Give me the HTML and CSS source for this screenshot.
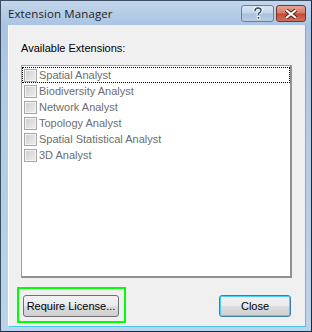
FILE: index.html
```html
<!DOCTYPE html>
<html lang="en">
<head>
  <meta charset="UTF-8" />
  <title>Extension Manager</title>
  <link rel="stylesheet" href="styles.css">
</head>
<body>

  <div class="window">
    <div class="titlebar">
      <span class="title">Extension Manager</span>
      <div class="caption-buttons">
        <div class="cap-btn help">
          <svg width="12" height="13" viewBox="0 0 12 13">
            <path d="M3 4 Q3 1 6 1 Q9 1 9 3.5 Q9 5 7 6 L6.5 6.5 L6.5 8" fill="none" stroke="#fff" stroke-width="3.4"/>
            <path d="M3 4 Q3 1 6 1 Q9 1 9 3.5 Q9 5 7 6 L6.5 6.5 L6.5 8" fill="none" stroke="#3b4b60" stroke-width="1.5"/>
            <rect x="5.2" y="9.5" width="2.6" height="2.6" fill="#3b4b60" stroke="#fff" stroke-width="0.8"/>
          </svg>
        </div>
        <div class="cap-btn close">
          <svg width="14" height="10" viewBox="0 0 14 10">
            <path d="M2 1 L12 9 M12 1 L2 9" stroke="#5a1a12" stroke-width="4"/>
            <path d="M2 1 L12 9 M12 1 L2 9" stroke="#fff" stroke-width="2.2"/>
          </svg>
        </div>
      </div>
    </div>

    <div class="client">
      <div class="label">Available Extensions:</div>

      <div class="listbox">
        <div class="item focused"><span class="check"></span>Spatial Analyst</div>
        <div class="item"><span class="check"></span>Biodiversity Analyst</div>
        <div class="item"><span class="check"></span>Network Analyst</div>
        <div class="item"><span class="check"></span>Topology Analyst</div>
        <div class="item"><span class="check"></span>Spatial Statistical Analyst</div>
        <div class="item"><span class="check"></span>3D Analyst</div>
      </div>

      <div class="footer">
        <div class="highlight">
          <button class="btn">Require License...</button>
        </div>
        <button class="btn default">Close</button>
      </div>
    </div>
  </div>

</body>
</html>
```

FILE: styles.css
```css
body {
  margin: 0;
  font-family: "Liberation Sans", Arial, sans-serif;
  font-size: 11px;
  background: #ffffff;
}
.window {
  width: 312px;
  height: 332px;
  box-sizing: border-box;
  border: 1px solid #3c4e63;
  border-right-color: #1b2a3a;
  border-bottom-color: #1b2a3a;
  background: linear-gradient(to bottom, #c3d6ec 0px, #a9c4e2 24px, #b3cbe6 120px, #bcd3ec 332px);
  display: flex;
  flex-direction: column;
  padding: 0 5px 4px 7px;
}
.titlebar {
  height: 24px;
  display: flex;
  align-items: flex-start;
  justify-content: space-between;
}
.title {
  font-family: "Open Sans", "DejaVu Sans", sans-serif;
  font-size: 11.5px;
  color: #1e1e1e;
  padding-top: 5px;
  letter-spacing: 0.1px;
}
.caption-buttons {
  display: flex;
  gap: 2px;
  padding-top: 4px;
}
.cap-btn {
  height: 17px;
  box-sizing: border-box;
  border: 1px solid #6d7f96;
  border-radius: 3px;
  display: flex;
  align-items: center;
  justify-content: center;
}
.cap-btn.help {
  width: 33px;
  background: linear-gradient(to bottom, #dbe6f3 0%, #c2d3e8 48%, #a9c0dc 52%, #b9cde5 100%);
}
.cap-btn.close {
  width: 30px;
  border-color: #7a3328;
  background: linear-gradient(to bottom, #e8a493 0%, #d67a66 48%, #c44a32 52%, #d0705a 100%);
}
.client {
  flex: 1;
  background: #f0f0f0;
  border-right: 1px solid #49c4f0;
  border-bottom: 1px solid #49c4f0;
  border-left: 1px solid #ffffff;
  display: flex;
  flex-direction: column;
  padding: 0 13px 0 12px;
}
.label {
  margin-top: 17px;
  height: 13px;
  color: #000;
}
.listbox {
  margin-top: 10px;
  height: 213px;
  box-sizing: border-box;
  background: #fff;
  border-left: 1px solid #a0a0a0;
  border-top: 1px solid #a0a0a0;
  border-right: 2px solid #8f9094;
  border-bottom: 2px solid #8f9094;
  padding: 1px 0 0 0;
}
.item {
  height: 16px;
  display: flex;
  align-items: center;
  color: #6d6d6d;
  padding-left: 1px;
  box-sizing: border-box;
}
.item.focused {
  outline: 1px dotted #000;
  outline-offset: -1px;
}
.check {
  width: 13px;
  height: 13px;
  box-sizing: border-box;
  border: 1px solid #a8a8a8;
  background: linear-gradient(135deg, #cfcfcf, #eeeeee);
  box-shadow: inset 0 0 0 1px #f4f4f4;
  margin-right: 2px;
  margin-left: 1px;
}
.footer {
  margin-top: 9px;
  display: flex;
  justify-content: space-between;
  align-items: center;
}
.highlight {
  border: 2px solid #00ff00;
  padding: 6px 5px 4px 4px;
  margin-left: -4px;
}
.btn {
  font-family: "Liberation Sans", Arial, sans-serif;
  font-size: 11px;
  color: #000;
  height: 22px;
  width: 96px;
  border: 1px solid #707070;
  border-radius: 3px;
  background: linear-gradient(to bottom, #f2f2f2 0%, #ebebeb 50%, #dddddd 51%, #cfcfcf 100%);
  padding: 0 2px;
}
.btn.default {
  width: 72px;
  border-color: #3c7fb1;
  box-shadow: inset 0 0 0 1px #48d0fb;
  margin-right: 1px;
  margin-top: 2px;
}
```
